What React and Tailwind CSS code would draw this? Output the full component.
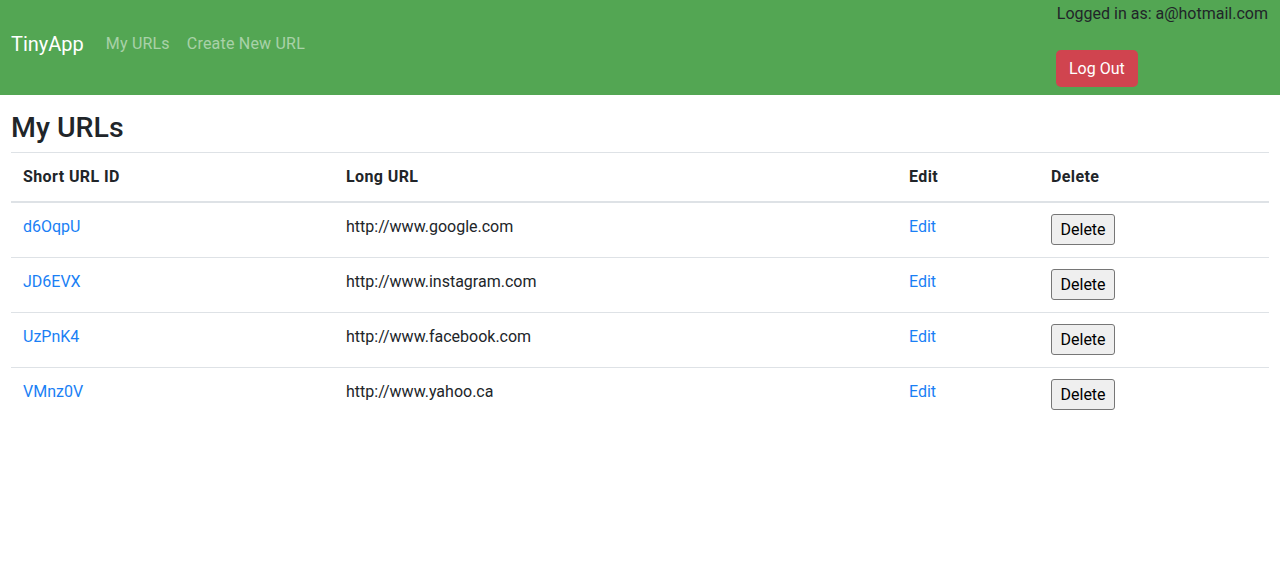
import React from 'react'

const urls = [
  { id: 'd6OqpU', long: 'http://www.google.com' },
  { id: 'JD6EVX', long: 'http://www.instagram.com' },
  { id: 'UzPnK4', long: 'http://www.facebook.com' },
  { id: 'VMnz0V', long: 'http://www.yahoo.ca' },
]

export default function App() {
  return (
    <div className="min-h-screen bg-white text-[#212529] font-['Roboto',sans-serif] text-base">
      {/* Navbar */}
      <nav className="h-[95px] bg-[#53a653] flex justify-between pl-[11px] pr-3">
        <div className="flex items-center gap-[22px] pb-[8px]">
          <a className="text-white text-xl leading-[30px]">TinyApp</a>
          <div className="flex gap-[17px]">
            <a className="text-white/50 leading-6 tracking-[0.2px]">My URLs</a>
            <a className="text-white/50 leading-6 tracking-[0.2px]">Create New URL</a>
          </div>
        </div>
        <div className="flex flex-col items-end">
          <div className="pt-[2px] leading-6">Logged in as: a@hotmail.com</div>
          <div className="w-[212px] mt-[24px]">
            <button className="bg-[#d0444f] text-white rounded-[5px] h-[37px] px-[13px] leading-6">
              Log Out
            </button>
          </div>
        </div>
      </nav>

      <main className="px-[11px]">
        <h3 className="text-[28.5px] font-medium leading-[34px] pt-[16px] pb-[7px]">My URLs</h3>
        <table className="w-full border-collapse">
          <thead>
            <tr className="border-t border-[#dee2e6]">
              <th className="w-[323px] text-left font-bold p-3 border-b-2 border-[#dee2e6] tracking-[0.4px]">Short URL ID</th>
              <th className="w-[563px] text-left font-bold p-3 border-b-2 border-[#dee2e6] tracking-[0.4px]">Long URL</th>
              <th className="w-[142px] text-left font-bold p-3 border-b-2 border-[#dee2e6] tracking-[0.4px]">Edit</th>
              <th className="text-left font-bold p-3 border-b-2 border-[#dee2e6] tracking-[0.4px]">Delete</th>
            </tr>
          </thead>
          <tbody>
            {urls.map((u, i) => (
              <tr key={u.id} className={i < urls.length - 1 ? 'border-b border-[#dee2e6]' : ''}>
                <td className="p-3 align-top leading-6">
                  <a className="text-[#1a7ff5]">{u.id}</a>
                </td>
                <td className="p-3 align-top leading-6">{u.long}</td>
                <td className="p-3 align-top leading-6">
                  <a className="text-[#1a7ff5]">Edit</a>
                </td>
                <td className="px-3 pt-[11px] pb-3 align-top">
                  <button className="h-[31px] px-[8.5px] bg-[#efefef] border border-[#767676] rounded-[3px] text-black leading-5">
                    Delete
                  </button>
                </td>
              </tr>
            ))}
          </tbody>
        </table>
      </main>
    </div>
  )
}
